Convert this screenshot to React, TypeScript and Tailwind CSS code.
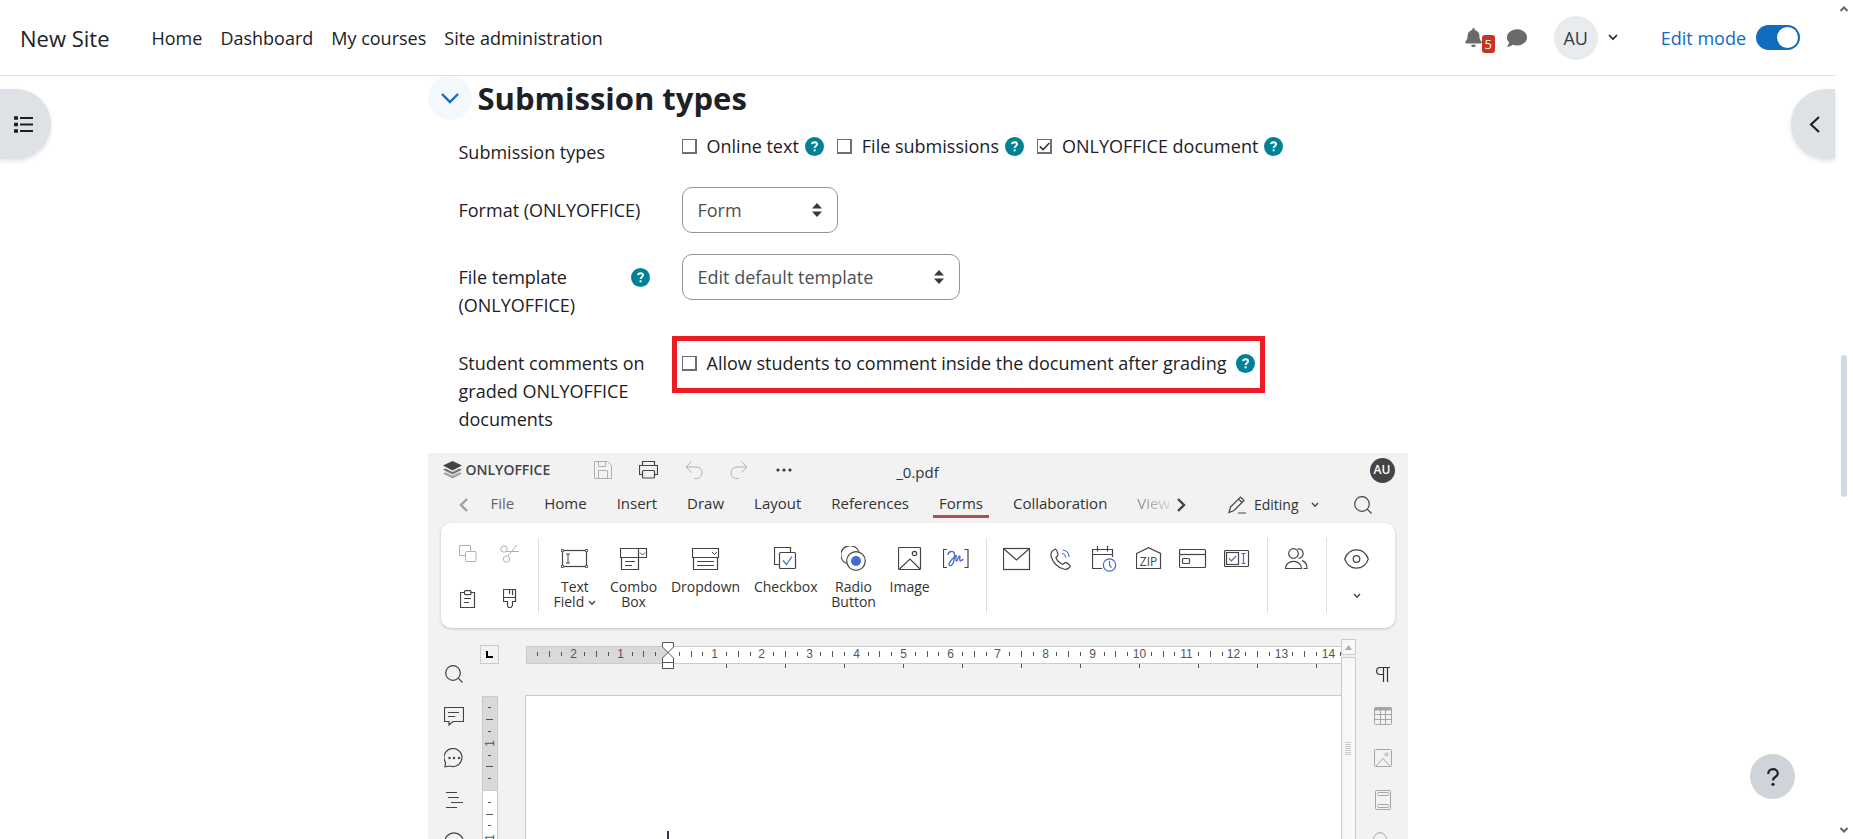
import React, { useState } from 'react';
import { FaBell, FaComment } from 'react-icons/fa';

interface IconProps {
  w: number;
  h: number;
  className?: string;
  children: React.ReactNode;
}

function Icon({ w, h, className = 'text-[#444]', children }: IconProps) {
  return (
    <svg
      width={w}
      height={h}
      viewBox={`0 0 ${w} ${h}`}
      fill="none"
      stroke="currentColor"
      className={`shrink-0 ${className}`}
      aria-hidden="true"
    >
      {children}
    </svg>
  );
}

const BLUE = '#446cca';

const SearchIcon = () => (
  <Icon w={18} h={18}>
    <circle cx="8" cy="8" r="7.3" strokeWidth="1.2" />
    <path d="M13.2 13.2L17.5 17.5" strokeWidth="1.2" />
  </Icon>
);

const SmallChevron = ({ className = 'text-[#444]' }: { className?: string }) => (
  <Icon w={8} h={6} className={className}>
    <path d="M1 1L4 4.3L7 1" strokeWidth="1.3" />
  </Icon>
);

const ImageIcon = ({ className }: { className?: string }) => (
  <Icon w={24} h={24} className={className}>
    <rect x="0.5" y="0.5" width="22" height="22" rx="1" strokeWidth="1.2" />
    <circle cx="16.5" cy="6.5" r="2.2" strokeWidth="1.2" />
    <path d="M1.5 22L12 12L22 22" strokeWidth="1.2" />
  </Icon>
);

function HelpIcon({ label }: { label: string }) {
  return (
    <button type="button" aria-label={label} className="h-[19px] w-[19px] shrink-0 rounded-full bg-[#008196]">
      <svg viewBox="0 0 19 19" fill="none" stroke="white" aria-hidden="true">
        <path d="M7 7.2C7.2 4.6 12 4.4 12 7.2C12 8.9 9.6 9 9.6 11" strokeWidth="2" />
        <rect x="8.6" y="12.3" width="2" height="2" fill="white" stroke="none" />
      </svg>
    </button>
  );
}

interface CheckProps {
  id: string;
  label: string;
  defaultChecked?: boolean;
}

function Check({ id, label, defaultChecked }: CheckProps) {
  const [checked, setChecked] = useState(!!defaultChecked);
  return (
    <label htmlFor={id} className="flex items-center gap-2.5">
      <span className="relative h-[15px] w-[15px] shrink-0">
        <input
          id={id}
          type="checkbox"
          checked={checked}
          onChange={(e) => setChecked(e.target.checked)}
          className="block h-[15px] w-[15px] appearance-none border border-r-2 border-b-2 border-[#6f6f6f] bg-white"
        />
        {checked && (
          <svg viewBox="0 0 15 15" className="pointer-events-none absolute inset-0" fill="none" stroke="#333">
            <path d="M2.8 7.4L6 10.6L12.4 4" strokeWidth="1.5" />
          </svg>
        )}
      </span>
      {label}
    </label>
  );
}

interface SelectProps {
  id: string;
  value: string;
  className: string;
}

function Select({ id, value, className }: SelectProps) {
  return (
    <div className={`relative ${className}`}>
      <select
        id={id}
        className="h-[46px] w-full appearance-none rounded-[10px] border border-[#8f959e] bg-white pr-10 pl-[15px] text-[#495057]"
      >
        <option>{value}</option>
      </select>
      <svg viewBox="0 0 10 14" className="pointer-events-none absolute top-4 right-4 h-3.5 w-2.5" fill="#343a40">
        <path d="M0 5.5L5 0L10 5.5Z" />
        <path d="M0 8.5L5 14L10 8.5Z" />
      </svg>
    </div>
  );
}

interface RowProps {
  label: string;
  htmlFor?: string;
  help?: boolean;
  children: React.ReactNode;
}

function Row({ label, htmlFor, help, children }: RowProps) {
  return (
    <div className="flex">
      <div className="flex w-[223px] shrink-0 items-start pt-[9px] pr-8">
        <label htmlFor={htmlFor} className="flex-1">
          {label}
        </label>
        {help && (
          <span className="flex h-7 items-center">
            <HelpIcon label={`Help with ${label}`} />
          </span>
        )}
      </div>
      <div className="min-w-0 flex-1">{children}</div>
    </div>
  );
}

const navLinks = ['Home', 'Dashboard', 'My courses', 'Site administration'];

function Navbar() {
  const [editMode, setEditMode] = useState(true);
  return (
    <header className="flex h-[76px] shrink-0 items-center border-b border-[#dee2e6] pr-[35px] pl-5">
      <a href="#" className="mr-[42px] text-[22px]">
        New Site
      </a>
      <nav className="flex gap-[18px]">
        {navLinks.map((link) => (
          <a key={link} href="#">
            {link}
          </a>
        ))}
      </nav>
      <div className="ml-auto flex items-center">
        <button aria-label="Notifications" className="relative mr-[25px] text-[#6a6a6a]">
          <FaBell className="h-[19px] w-[17px]" />
          <span className="absolute top-[7px] left-[17px] flex h-[18px] w-[13px] items-center justify-center rounded-[3px] bg-[#ca3120] text-[13px] leading-none text-white">
            5
          </span>
        </button>
        <button aria-label="Messages" className="mr-[27px] text-[#6a6a6a]">
          <FaComment className="h-5 w-5" />
        </button>
        <button className="mr-[43px] flex items-center gap-2.5">
          <span className="flex h-11 w-11 items-center justify-center rounded-full bg-[#e9ecef] text-[#343a40]">AU</span>
          <Icon w={10} h={7} className="text-[#1d2125]">
            <path d="M1 1L5 5L9 1" strokeWidth="1.6" />
          </Icon>
        </button>
        <label htmlFor="edit-mode" className="mr-2.5 text-[#0f6cbf]">
          Edit mode
        </label>
        <span className="relative h-[25px] w-11">
          <input
            id="edit-mode"
            type="checkbox"
            checked={editMode}
            onChange={(e) => setEditMode(e.target.checked)}
            className="block h-[25px] w-11 appearance-none rounded-full bg-gray-400 checked:bg-[#0f6cbf]"
          />
          <span
            className={`pointer-events-none absolute top-0.5 h-[21px] w-[21px] rounded-full bg-white ${
              editMode ? 'right-0.5' : 'left-0.5'
            }`}
          />
        </span>
      </div>
    </header>
  );
}

const tabs = ['File', 'Home', 'Insert', 'Draw', 'Layout', 'References', 'Forms', 'Collaboration', 'View'];

function EditorHeader() {
  return (
    <div className="text-[15px] leading-5 text-[#333]">
      <div className="relative flex h-[34px] items-center pr-[13px] pl-[15px]">
        <Icon w={19} h={18}>
          <path d="M0 12.5L9.5 17.5L19 12.5L16.5 11.3L9.5 14.8L2.5 11.3Z" fill="#a0a0a0" stroke="none" />
          <path d="M0 8.8L9.5 13.6L19 8.8L16.5 7.6L9.5 11L2.5 7.6Z" fill="#777" stroke="none" />
          <path d="M0 4.6L9.5 0L19 4.6L9.5 9.4Z" fill="#444" stroke="none" />
        </Icon>
        <span className="ml-1 w-[83px] text-[14px] font-semibold text-[#444]">ONLYOFFICE</span>
        <div className="ml-[45px] flex items-center gap-[27px]">
          <button aria-label="Save">
            <Icon w={18} h={18} className="text-[#b0b0b0]">
              <path d="M0.5 0.5H13.5L17.5 4.5V17.5H0.5Z" />
              <path d="M4.5 0.5V5.5H11.5V0.5M4.5 17.5V9.5H13.5V17.5" />
            </Icon>
          </button>
          <button aria-label="Print">
            <Icon w={19} h={18}>
              <path d="M3.5 4.5V0.5H15.5V4.5M3.5 13.5H0.5V4.5H18.5V13.5H15.5" strokeWidth="1.2" />
              <rect x="3.5" y="9.5" width="12" height="7.5" rx="1" strokeWidth="1.2" />
            </Icon>
          </button>
          <button aria-label="Undo">
            <Icon w={18} h={18} className="text-[#b0b0b0]">
              <path d="M6.5 0.5L1 6L6.5 11.5M1 6H11C19 6 19 17.5 11 17.5H9.5" />
            </Icon>
          </button>
          <button aria-label="Redo">
            <Icon w={18} h={18} className="text-[#b0b0b0]">
              <path d="M11.5 0.5L17 6L11.5 11.5M17 6H7C-1 6 -1 17.5 7 17.5H8.5" />
            </Icon>
          </button>
          <button aria-label="Customize quick access toolbar">
            <Icon w={18} h={4}>
              <circle cx="3" cy="2" r="1.6" fill="#333" stroke="none" />
              <circle cx="9" cy="2" r="1.6" fill="#333" stroke="none" />
              <circle cx="15" cy="2" r="1.6" fill="#333" stroke="none" />
            </Icon>
          </button>
        </div>
        <span className="absolute inset-x-0 top-[9px] text-center">_0.pdf</span>
        <span className="ml-auto flex h-[25px] w-[25px] items-center justify-center rounded-full bg-[#444] text-[12px] font-semibold text-white">
          AU
        </span>
      </div>

      <div className="flex h-9 items-center pr-9 pl-[31px]">
        <button aria-label="Scroll tabs left">
          <Icon w={9} h={14} className="text-[#a0a0a0]">
            <path d="M8 1L2 7L8 13" strokeWidth="2.4" />
          </Icon>
        </button>
        <div className="ml-[17px] flex w-[684px] gap-[18px] self-start overflow-hidden">
          {tabs.map((tab) => (
            <button
              key={tab}
              className={`h-[31px] shrink-0 border-b-3 px-1.5 pt-[3px] ${
                tab === 'Forms' ? 'border-[#aa5252]' : 'border-transparent'
              } ${tab === 'View' ? 'bg-linear-to-r from-[#777] to-[#e8e8e8] bg-clip-text text-transparent' : ''} ${
                tab === 'File' ? 'text-[#666]' : ''
              }`}
            >
              {tab}
            </button>
          ))}
        </div>
        <button aria-label="Scroll tabs right" className="ml-2">
          <Icon w={9} h={14}>
            <path d="M1 1L7 7L1 13" strokeWidth="2.4" />
          </Icon>
        </button>
        <button className="ml-auto flex items-center text-[14px]">
          <Icon w={18} h={18}>
            <path d="M1 16.5L2.5 11L12.5 1L16 4.5L6 14.5ZM10.5 3L14 6.5M10 17H18" strokeWidth="1.2" />
          </Icon>
          <span className="mr-3 ml-2">Editing</span>
          <SmallChevron />
        </button>
        <button aria-label="Search" className="ml-[35px]">
          <SearchIcon />
        </button>
      </div>
    </div>
  );
}

const formTools = [
  {
    lines: ['Text', 'Field'],
    arrow: true,
    icon: (
      <Icon w={27} h={24}>
        <rect x="1.5" y="3.5" width="24" height="16" strokeWidth="1.2" />
        <path d="M5 7H9M7 7V16M5 16H9" />
        <g fill="white" stroke={BLUE}>
          <rect x="0.5" y="2.5" width="2" height="2" />
          <rect x="24.5" y="2.5" width="2" height="2" />
          <rect x="0.5" y="18.5" width="2" height="2" />
          <rect x="24.5" y="18.5" width="2" height="2" />
        </g>
      </Icon>
    ),
  },
  {
    lines: ['Combo', 'Box'],
    icon: (
      <Icon w={28} h={24}>
        <path d="M0.5 1.5H26.5V10.5H0.5ZM18.5 1.5V22.5H1.5V10.5M5 14.5H15M5 18.5H12" strokeWidth="1.2" />
        <path d="M20 5.5L22.5 8L25 5.5" />
      </Icon>
    ),
  },
  {
    lines: ['Dropdown'],
    icon: (
      <Icon w={28} h={24}>
        <path d="M0.5 1.5H26.5V10.5H0.5ZM1.5 10.5V22.5H25.5V10.5M5 14.5H22M5 18.5H22" strokeWidth="1.2" />
        <path d="M20 5L22.5 7.5L25 5" />
      </Icon>
    ),
  },
  {
    lines: ['Checkbox'],
    icon: (
      <Icon w={23} h={24}>
        <path d="M5 17.5H0.5V0.5H16.5V5" strokeWidth="1.2" />
        <rect x="5.5" y="5.5" width="16" height="16" rx="1" strokeWidth="1.2" />
        <path d="M9 13.5L12.5 17.5L18 9.5" stroke={BLUE} strokeWidth="1.3" />
      </Icon>
    ),
  },
  {
    lines: ['Radio', 'Button'],
    icon: (
      <Icon w={25} h={25}>
        <path d="M5.5 17.5A9.3 9.3 0 1 1 17.8 5.5" strokeWidth="1.2" />
        <circle cx="15" cy="15" r="9.3" strokeWidth="1.2" />
        <circle cx="15" cy="15" r="5" fill={BLUE} stroke="none" />
      </Icon>
    ),
  },
  { lines: ['Image'], icon: <ImageIcon /> },
  {
    lines: [''],
    icon: (
      <Icon w={26} h={24}>
        <path d="M4 2.5H0.5V20.5H4M21.5 2.5H25V20.5H21.5" strokeWidth="1.2" />
        <path
          d="M5 8C5 4 11 3 11.5 7C12 12 10 20 6.5 18.5C4 17 10 11 13 8.5C14 8 12 14 13.5 14C15 14 15 9 16.5 9C17.5 9 16 14 17.5 14C18.5 14 19 12.5 20.5 12.5"
          stroke={BLUE}
          strokeWidth="1.3"
        />
      </Icon>
    ),
  },
];

const fieldTools = [
  {
    name: 'Email address',
    icon: (
      <Icon w={28} h={24}>
        <rect x="0.5" y="1.5" width="26" height="21" strokeWidth="1.2" />
        <path d="M1 2L13.5 13L26 2" strokeWidth="1.2" />
      </Icon>
    ),
  },
  {
    name: 'Phone number',
    icon: (
      <Icon w={22} h={24}>
        <path
          d="M5.5 2C2 3.5 0 6.5 1.5 10.5C3.5 16 8 20.5 13.5 22C16.5 23 19 21.5 20.3 19.3C20.5 18.5 18 16.5 15.8 15.6C14.5 15.2 13.5 17.5 12.5 17.2C9.5 16 7 13.5 6 10.8C5.8 9.8 8.3 9 8 7.8C7.6 5.8 6.8 2.5 5.5 2Z"
          strokeWidth="1.2"
        />
        <path d="M12 6.5C14.3 6.8 15.5 8.3 15.7 10.5M12.5 3C16.5 3.3 18.8 6 19 10" stroke={BLUE} strokeWidth="1.2" />
      </Icon>
    ),
  },
  {
    name: 'Date and time',
    icon: (
      <Icon w={25} h={27}>
        <path d="M10 23.5H0.5V4.5H20.5V12M0.5 9.5H20.5M5.5 1V6.5M15.5 1V6.5" strokeWidth="1.2" />
        <circle cx="17.5" cy="20" r="6.2" stroke={BLUE} strokeWidth="1.2" />
        <path d="M17.5 16V20.5L19.5 22.5" stroke={BLUE} strokeWidth="1.2" />
      </Icon>
    ),
  },
  {
    name: 'Zip code',
    icon: (
      <Icon w={26} h={24}>
        <path d="M0.5 6.5L12.5 0.7L24.5 6.5V21.5H0.5Z" strokeWidth="1.2" />
        <text x="12.5" y="18.5" textAnchor="middle" fontSize="12" fill="currentColor" stroke="none">
          ZIP
        </text>
      </Icon>
    ),
  },
  {
    name: 'Credit card',
    icon: (
      <Icon w={28} h={24}>
        <rect x="0.5" y="2.5" width="26" height="18" rx="1" strokeWidth="1.2" />
        <path d="M0.5 7.5H26.5" strokeWidth="1.2" />
        <rect x="3.5" y="11.5" width="7" height="5" rx="1" strokeWidth="1.2" />
      </Icon>
    ),
  },
  {
    name: 'Complex field',
    icon: (
      <Icon w={26} h={24}>
        <rect x="0.5" y="3.5" width="24" height="16" rx="1" strokeWidth="1.2" />
        <rect x="2.5" y="5.5" width="12" height="12" strokeWidth="1.2" />
        <path d="M5 11.5L7.5 14L12 9M17.5 6.5H21.5M19.5 6.5V16.5M17.5 16.5H21.5" stroke={BLUE} strokeWidth="1.2" />
      </Icon>
    ),
  },
];

const Separator = () => <div className="w-px self-stretch bg-[#dfdfdf]" />;

function Toolbar() {
  return (
    <div className="mx-[13px] flex h-[105px] rounded-[10px] bg-white py-[15px] pr-2 text-[14px] leading-[15px] text-[#333] shadow-[0_1px_3px_rgba(0,0,0,0.2)]">
      <div className="grid w-[97px] grid-cols-2 content-between justify-items-center px-1.5 pt-1.5 pb-1">
        <button aria-label="Copy">
          <Icon w={18} h={18} className="text-[#b0b0b0]">
            <path d="M6 10.5H0.5V0.5H11.5V6" />
            <rect x="6.5" y="6.5" width="10.5" height="10" rx="1" />
          </Icon>
        </button>
        <button aria-label="Cut">
          <Icon w={20} h={20} className="text-[#b0b0b0]">
            <circle cx="4" cy="5" r="3.2" />
            <circle cx="6.5" cy="15" r="3.2" />
            <path d="M8 12L17 1M6.5 7.5H19" />
          </Icon>
        </button>
        <button aria-label="Paste">
          <Icon w={16} h={19}>
            <path d="M4.5 2.5H0.5V17.5H14.5V2.5H10.5" strokeWidth="1.2" />
            <rect x="4.5" y="0.6" width="6.5" height="4" rx="1" strokeWidth="1.2" />
            <path d="M4 8.5H11M4 12.5H9" strokeWidth="1.2" />
          </Icon>
        </button>
        <button aria-label="Copy style">
          <Icon w={14} h={20}>
            <path
              d="M0.5 0.5H12.5V12.5H9.5V16.5L8 18.5H5.5L4.5 17V12.5H0.5ZM0.5 8.5H12.5M6.5 0.5V5M9.5 0.5V6"
              strokeWidth="1.2"
            />
          </Icon>
        </button>
      </div>
      <Separator />
      <div className="flex flex-1 justify-between pr-4 pl-[15px]">
        {formTools.map((tool, i) => (
          <button key={i} aria-label={tool.lines[0] || 'Signature'} className="flex flex-col items-center">
            <span className="flex h-[41px] items-center">{tool.icon}</span>
            <span>
              {tool.lines[0]}
              {tool.lines[1] && (
                <>
                  <br />
                  {tool.lines[1]}
                </>
              )}
              {tool.arrow && <SmallChevron className="ml-1 inline-block text-[#444]" />}
            </span>
          </button>
        ))}
      </div>
      <Separator />
      <div className="flex px-2">
        {fieldTools.map((tool) => (
          <button key={tool.name} aria-label={tool.name} className="flex h-[41px] w-11 items-center justify-center">
            {tool.icon}
          </button>
        ))}
      </div>
      <Separator />
      <button aria-label="Manage roles" className="flex h-[41px] w-[58px] items-center justify-center">
        <Icon w={23} h={22}>
          <circle cx="8.5" cy="5.5" r="4.8" strokeWidth="1.2" />
          <path d="M0.5 20.5C0.5 11 16.5 11 16.5 20.5Z" strokeWidth="1.2" />
          <path d="M12.5 1C19.5 -0.5 20 10.5 13.5 10.3M17 12.7C20 13.5 22 16.5 22 20.5H18.5" strokeWidth="1.2" />
        </Icon>
      </button>
      <Separator />
      <button aria-label="View form" className="flex w-[60px] flex-col items-center">
        <span className="flex h-[41px] items-center">
          <Icon w={25} h={20}>
            <path d="M0.7 10C5 -2.2 20 -2.2 24.3 10C20 22.2 5 22.2 0.7 10Z" strokeWidth="1.2" />
            <circle cx="12.5" cy="10" r="3.3" strokeWidth="1.2" />
          </Icon>
        </span>
        <span className="pt-3.5">
          <SmallChevron />
        </span>
      </button>
    </div>
  );
}

// Distance between two centimetre marks, in pixels.
const CM = 47.2;

function HorizontalRuler() {
  const zero = 143;
  const quarters = Array.from({ length: 69 }, (_, i) => i - 11).filter((q) => q !== 0);
  const stops = Array.from({ length: 11 }, (_, i) => zero + (i + 1) * 1.25 * CM);
  return (
    <svg className="block h-[34px] w-full text-[#555]" stroke="currentColor" fill="none" aria-hidden="true">
      <rect x="1" y="8" width="100%" height="18" fill="#cbcbcb" stroke="none" />
      <rect x="2" y="9" width="100%" height="16" fill="white" stroke="none" />
      <rect x="2" y="9" width="141" height="16" fill="#d9d9d9" stroke="none" />
      {quarters.map((q) => {
        const x = Math.round(zero + (q * CM) / 4) - 0.5;
        if (q % 4 === 0) {
          return (
            <text
              key={q}
              x={x}
              y="20"
              textAnchor="middle"
              fontSize="12"
              fill="#555"
              stroke="none"
              className="font-['Liberation_Sans']"
            >
              {Math.abs(q / 4)}
            </text>
          );
        }
        return q % 2 === 0 ? (
          <path key={q} d={`M${x} 13V19`} />
        ) : (
          <path key={q} d={`M${x} 14V18`} />
        );
      })}
      {stops.map((x) => (
        <path key={x} d={`M${Math.round(x) - 0.5} 26V30`} />
      ))}
      <path d="M137.5 4.5H148.5V9L137.5 20V24.5H148.5V20L137.5 9Z" fill="white" />
      <rect x="137.5" y="24.5" width="11" height="6" fill="white" />
    </svg>
  );
}

function VerticalRuler() {
  const zero = 94;
  const quarters = Array.from({ length: 37 }, (_, i) => i - 7).filter((q) => q !== 0);
  return (
    <svg
      width="16"
      height="440"
      viewBox="0 0 16 440"
      className="ml-1 text-[#555]"
      stroke="currentColor"
      fill="none"
      aria-hidden="true"
    >
      <rect x="0.5" y="0.5" width="15" height="439" fill="white" stroke="#cbcbcb" />
      <rect x="0.5" y="0.5" width="15" height="94" fill="#d9d9d9" stroke="#cbcbcb" />
      {quarters.map((q) => {
        const y = Math.round(zero + (q * CM) / 4) + 0.5;
        if (q % 4 === 0) {
          return (
            <text
              key={q}
              transform={`translate(12 ${y}) rotate(-90)`}
              textAnchor="middle"
              fontSize="12"
              fill="#555"
              stroke="none"
              className="font-['Liberation_Sans']"
            >
              {Math.abs(q / 4)}
            </text>
          );
        }
        return q % 2 === 0 ? (
          <path key={q} d={`M4 ${y}H11`} />
        ) : (
          <path key={q} d={`M6 ${y}H9`} />
        );
      })}
    </svg>
  );
}

const leftPanel = [
  { name: 'Find', icon: <SearchIcon /> },
  {
    name: 'Comments',
    icon: (
      <Icon w={20} h={20}>
        <path d="M0.5 1.5H19.5V15.5H9L5 19V15.5H0.5ZM4 6.5H15M4 10.5H11" strokeWidth="1.2" />
      </Icon>
    ),
  },
  {
    name: 'Chat',
    icon: (
      <Icon w={20} h={20}>
        <path d="M1 18.8L1.5 14.5A9 9 0 1 1 6 18Z" strokeWidth="1.2" />
        <g fill="currentColor" stroke="none">
          <circle cx="5.5" cy="10" r="1.2" />
          <circle cx="10" cy="10" r="1.2" />
          <circle cx="15" cy="10" r="1.2" />
        </g>
      </Icon>
    ),
  },
  {
    name: 'Headings',
    icon: (
      <Icon w={18} h={18}>
        <path d="M1 1.5H12M3 6.5H14M6 11.5H18M1 16.5H12" strokeWidth="1.2" />
      </Icon>
    ),
  },
  {
    name: 'Feedback',
    icon: (
      <Icon w={20} h={20}>
        <circle cx="10" cy="10" r="9.2" strokeWidth="1.2" />
      </Icon>
    ),
  },
];

const rightPanel = [
  {
    name: 'Paragraph settings',
    icon: (
      <Icon w={16} h={17} className="text-[#333]">
        <path d="M15 1.5H5C0.5 1.5 0.5 8.5 5 8.5H8.5M8.5 1.5V16M12.5 1.5V16" strokeWidth="1.2" />
      </Icon>
    ),
  },
  {
    name: 'Table settings',
    icon: (
      <Icon w={20} h={20} className="text-[#a5a5a5]">
        <rect x="1.5" y="1.5" width="17" height="17" rx="1" />
        <path d="M1.5 3H18.5" strokeWidth="3" />
        <path d="M7.5 3V18M12.5 3V18M1.5 8.5H18.5M1.5 13.5H18.5" />
      </Icon>
    ),
  },
  {
    name: 'Image settings',
    icon: (
      <Icon w={18} h={18} className="text-[#a5a5a5]">
        <rect x="0.5" y="0.5" width="17" height="17" rx="1" />
        <circle cx="12.5" cy="5.5" r="1.5" />
        <path d="M2 17L9 9.5L16 17" />
      </Icon>
    ),
  },
  {
    name: 'Header and footer settings',
    icon: (
      <Icon w={16} h={20} className="text-[#a5a5a5]">
        <rect x="0.5" y="0.5" width="15" height="19" rx="1" />
        <rect x="2.5" y="2.5" width="11" height="3" rx="1" />
        <rect x="2.5" y="14.5" width="11" height="3" rx="1" />
      </Icon>
    ),
  },
  {
    name: 'Shape settings',
    icon: (
      <Icon w={20} h={20} className="text-[#a5a5a5]">
        <circle cx="7" cy="7" r="6.3" />
        <rect x="8.5" y="8.5" width="11" height="11" />
      </Icon>
    ),
  },
];

function SidePanel({ items, className }: { items: typeof leftPanel; className: string }) {
  return (
    <aside className={`flex shrink-0 flex-col pt-[25px] pl-0.5 ${className}`}>
      {items.map((item) => (
        <button key={item.name} aria-label={item.name} className="flex h-[42px] items-center justify-center">
          {item.icon}
        </button>
      ))}
    </aside>
  );
}

function Editor() {
  return (
    <section className="mt-5 flex h-[640px] flex-col bg-[#f2f2f2]">
      <EditorHeader />
      <Toolbar />
      <div className="flex min-h-0 flex-1">
        <SidePanel items={leftPanel} className="w-[50px]" />
        <div className="w-[47px] shrink-0 pt-[17px]">
          <button
            aria-label="Tab stop"
            className="mb-8 ml-0.5 flex h-[19px] w-[19px] items-center justify-center border border-[#cbcbcb]"
          >
            <Icon w={7} h={7} className="text-black">
              <path d="M1 0V6H7" strokeWidth="2" />
            </Icon>
          </button>
          <VerticalRuler />
        </div>
        <div className="flex min-w-0 flex-1 flex-col pt-2.5">
          <HorizontalRuler />
          <div className="mt-[23px] flex-1 border-t border-l border-[#cbcbcb] bg-white">
            <div className="mt-[135px] ml-[141px] h-5 w-0.5 bg-[#2f3a4f]" />
          </div>
        </div>
        <div className="flex w-[15px] shrink-0 flex-col gap-0.5 pt-[11px]">
          <div className="flex h-4 items-center justify-center border border-[#cbcbcb] bg-[#f7f7f7]">
            <svg width="7" height="5" viewBox="0 0 7 5" fill="#adadad" aria-hidden="true">
              <path d="M0 5L3.5 0L7 5Z" />
            </svg>
          </div>
          <div className="flex h-48 justify-center border border-[#cbcbcb] bg-[#f7f7f7] pt-[84px]">
            <Icon w={6} h={14} className="text-[#cbcbcb]">
              <path d="M0 0.5H6M0 2.5H6M0 4.5H6M0 6.5H6M0 8.5H6M0 10.5H6M0 12.5H6" />
            </Icon>
          </div>
        </div>
        <SidePanel items={rightPanel} className="w-[52px]" />
      </div>
    </section>
  );
}

export default function App() {
  return (
    <div className="flex h-screen overflow-hidden bg-white font-['Open_Sans','Noto_Sans',sans-serif] text-[18px] leading-7 text-[#1d2125]">
      <div className="relative flex min-w-0 flex-1 flex-col">
        <Navbar />
        <main className="mx-auto w-full max-w-[980px] flex-1 overflow-hidden">
          <div className="flex items-center gap-1.5">
            <button
              aria-label="Collapse submission types"
              className="flex h-11 w-11 items-center justify-center rounded-full bg-[#f3f8fc]"
            >
              <Icon w={18} h={11} className="text-[#0f6cbf]">
                <path d="M1 1L9 9L17 1" strokeWidth="2.4" />
              </Icon>
            </button>
            <h3 className="text-[31px] leading-11 font-bold">Submission types</h3>
          </div>

          <form className="mt-[9px] flex flex-col gap-[21px] pl-[31px]">
            <Row label="Submission types">
              <div className="flex items-center pt-[3px]">
                <Check id="online-text" label="Online text" />
                <span className="mr-[13px] ml-1.5 flex">
                  <HelpIcon label="Help with Online text" />
                </span>
                <Check id="file-submissions" label="File submissions" />
                <span className="mr-[13px] ml-1.5 flex">
                  <HelpIcon label="Help with File submissions" />
                </span>
                <Check id="onlyoffice-document" label="ONLYOFFICE document" defaultChecked />
                <span className="ml-1.5 flex">
                  <HelpIcon label="Help with ONLYOFFICE document" />
                </span>
              </div>
            </Row>
            <Row label="Format (ONLYOFFICE)" htmlFor="format">
              <Select id="format" value="Form" className="w-[156px]" />
            </Row>
            <Row label="File template (ONLYOFFICE)" htmlFor="template" help>
              <Select id="template" value="Edit default template" className="w-[278px]" />
            </Row>
            <Row label="Student comments on graded ONLYOFFICE documents">
              <div className="relative flex w-fit items-center gap-2.5 pt-[9px]">
                <Check id="comments" label="Allow students to comment inside the document after grading" />
                <HelpIcon label="Help with student comments" />
                <div className="pointer-events-none absolute -top-1 -right-2.5 -left-2.5 h-[57px] border-5 border-[#ed1c24]" />
              </div>
            </Row>
          </form>

          <Editor />
        </main>

        <button
          aria-label="Open course index"
          className="absolute top-[89px] left-0 flex h-[70px] w-[51px] items-center rounded-r-full bg-[#dee2e6] pl-3.5 shadow-[0_2px_4px_rgba(0,0,0,0.12)]"
        >
          <Icon w={19} h={17} className="text-[#1d2125]">
            <path d="M0 2H4M0 8.5H4M0 15H4" strokeWidth="3.5" />
            <path d="M6 2H19M6 8.5H19M6 15H19" strokeWidth="2.2" />
          </Icon>
        </button>
        <button
          aria-label="Open block drawer"
          className="absolute top-[89px] right-0 flex h-[70px] w-11 items-center rounded-l-full bg-[#dee2e6] pl-[18px] shadow-[0_2px_4px_rgba(0,0,0,0.12)]"
        >
          <Icon w={11} h={17} className="text-[#1d2125]">
            <path d="M10 1L2 8.5L10 16" strokeWidth="2.2" />
          </Icon>
        </button>
        <button
          aria-label="Help"
          className="absolute right-10 bottom-10 flex h-[45px] w-[45px] items-center justify-center rounded-full bg-[#ced4da]"
        >
          <Icon w={12} h={18} className="text-[#1d2125]">
            <path d="M1.2 6C1.2 -0.3 10.8 -0.3 10.8 5.5C10.8 9 6 8.5 6 12.5" strokeWidth="2.2" />
            <circle cx="6" cy="16.3" r="1.6" fill="currentColor" stroke="none" />
          </Icon>
        </button>
      </div>

      {/* page scroll bar */}
      <div className="flex w-[18px] shrink-0 flex-col items-center justify-between py-1.5">
        <Icon w={8} h={6} className="text-[#666]">
          <path d="M0.5 5L4 1.5L7.5 5" strokeWidth="2" />
        </Icon>
        <div className="mt-3 h-[142px] w-1.5 rounded-full bg-[#cfdae3]" />
        <Icon w={8} h={6} className="text-[#666]">
          <path d="M0.5 1L4 4.5L7.5 1" strokeWidth="2" />
        </Icon>
      </div>
    </div>
  );
}
